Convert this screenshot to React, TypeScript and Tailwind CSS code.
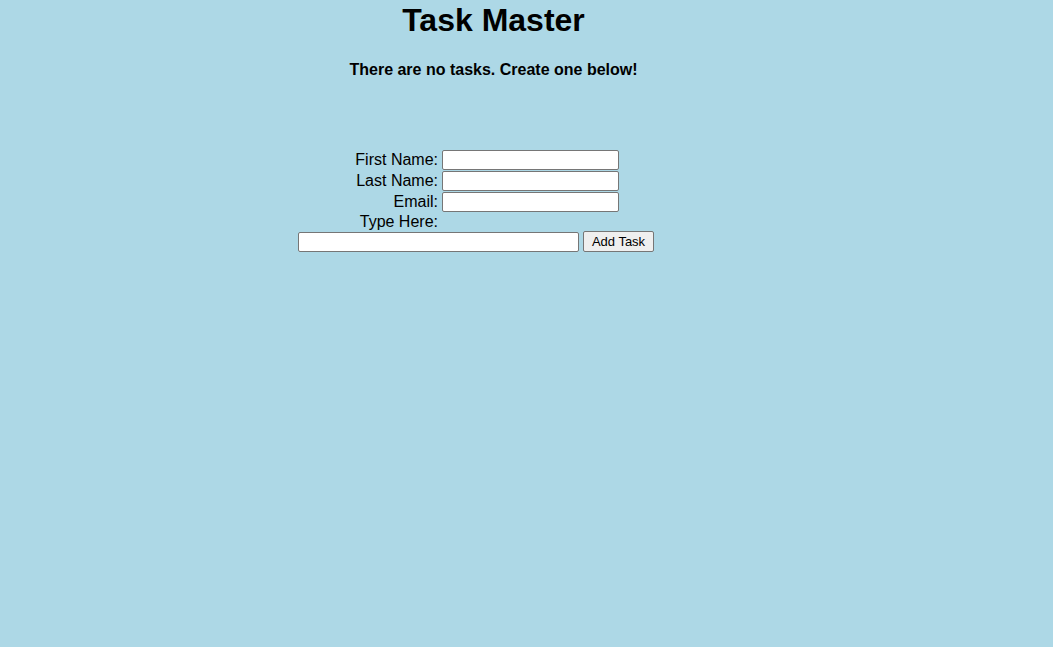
const labelCls = "w-[140px] text-right text-[16px] leading-[18px] text-black";
const inputCls = "h-[20px] rounded-[2px] border border-[#767676] bg-white px-[2px] text-[13px] outline-none";

const FieldRow = ({ label, width }: { label: string; width: string }) => (
  <div className="flex h-[21px] items-center gap-[4px]">
    <label className={labelCls}>{label}</label>
    <input type="text" className={`${inputCls} ${width}`} />
  </div>
);

const App = () => {
  return (
    <main className="min-h-[647px] w-full bg-[#add8e6] font-['Liberation_Sans',Arial,sans-serif] text-black">
      <div className="w-[987px] text-center">
        <h1 className="pt-[2px] text-[32px] font-bold leading-[37px]">Task Master</h1>
        <p className="mt-[22px] text-[16px] font-bold leading-[18px]">There are no tasks. Create one below!</p>
      </div>

      <form className="ml-[298px] mt-[70px] flex flex-col" onSubmit={(e) => e.preventDefault()}>
        <FieldRow label="First Name:" width="w-[177px]" />
        <FieldRow label="Last Name:" width="w-[177px]" />
        <FieldRow label="Email:" width="w-[177px]" />
        <div className="flex h-[19px] items-center">
          <label className={labelCls}>Type Here:</label>
        </div>
        <div className="flex h-[21px] items-center gap-[4px]">
          <input type="text" className={`${inputCls} w-[281px]`} />
          <button
            type="submit"
            className="h-[21px] w-[71px] rounded-[2px] border border-[#767676] bg-[#efefef] text-[13px] leading-none text-black"
          >
            Add Task
          </button>
        </div>
      </form>
    </main>
  );
};

export default App;
